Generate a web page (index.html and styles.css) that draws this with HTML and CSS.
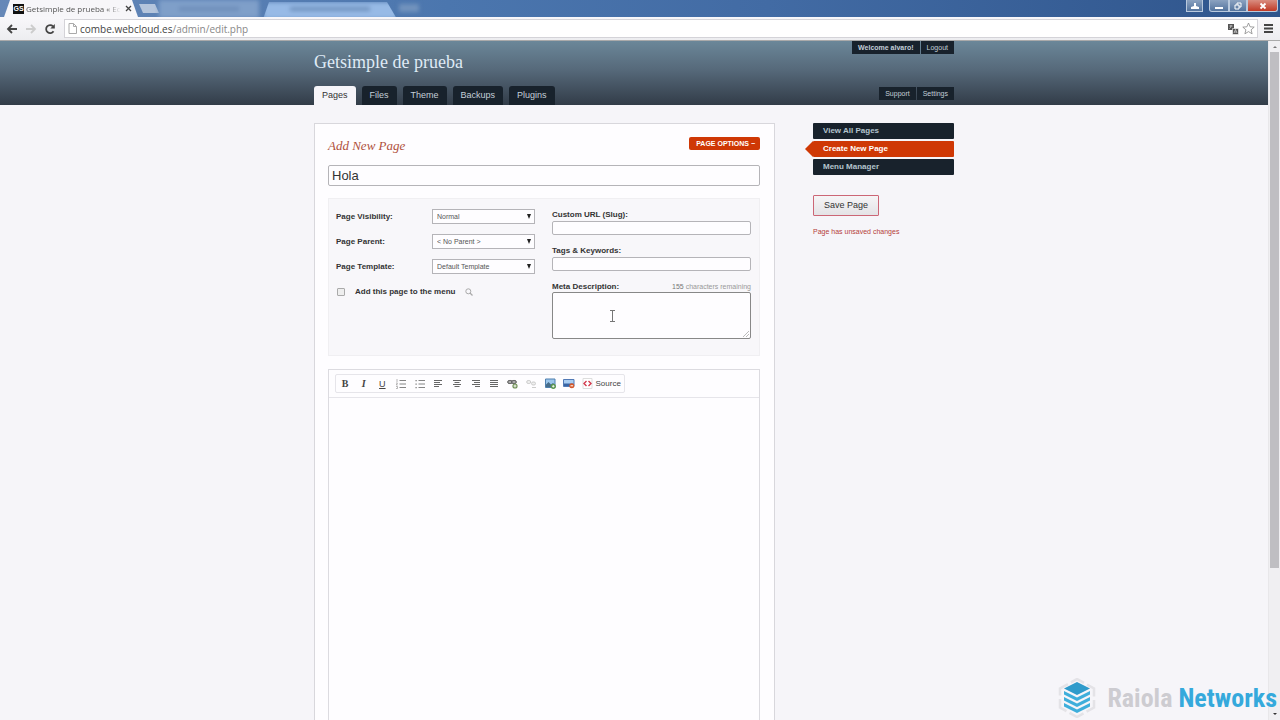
FILE: index.html
```html
<!DOCTYPE html>
<html lang="en">
<head>
<meta charset="UTF-8">
<title>Getsimple de prueba</title>
<link rel="stylesheet" href="styles.css">
</head>
<body>

<div class="tabstrip">
  <div class="tab">
    <span class="favicon">GS</span>
    <span class="tab-title">Getsimple de prueba « Ec</span>
    <button class="tab-close" aria-label="Close tab">
      <svg width="7" height="7" viewBox="0 0 7 7"><path d="M1 1l5 5M6 1L1 6" stroke="#444" stroke-width="1.3"/></svg>
    </button>
  </div>
  <button class="new-tab" aria-label="New tab"></button>
  <div class="blurred one"><i></i></div>
  <div class="blurred two"><i></i></div>
  <div class="blurred three"></div>
  <div class="window-buttons">
    <button class="win user" aria-label="User"><svg width="8" height="8" viewBox="0 0 8 8"><path d="M3 1h2v3l3 1v2H0V5l3-1z" fill="#fff"/></svg></button>
    <button class="win min" aria-label="Minimize"><svg width="8" height="8" viewBox="0 0 8 8"><path d="M0 5h8v2H0z" fill="#fff"/></svg></button>
    <button class="win max" aria-label="Restore"><svg width="8" height="8" viewBox="0 0 8 8"><path d="M3 3V1h4v4H5M1 3h4v4H1z" fill="none" stroke="#fff"/></svg></button>
    <button class="win close" aria-label="Close"><svg width="8" height="8" viewBox="0 0 8 8"><path d="M1.500 1.500l5 5M6.500 1.500l-5 5" stroke="#fff" stroke-width="1.800"/></svg></button>
  </div>
</div>

<div class="toolbar">
  <button class="nav" aria-label="Back"><svg width="12" height="10" viewBox="0 0 12 10"><path d="M11 5H2M6 1L2 5l4 4" fill="none" stroke="#444" stroke-width="1.800"/></svg></button>
  <button class="nav" aria-label="Forward"><svg width="12" height="10" viewBox="0 0 12 10"><path d="M1 5h9M6 1l4 4-4 4" fill="none" stroke="#ccc" stroke-width="1.800"/></svg></button>
  <button class="nav" aria-label="Reload"><svg width="12" height="12" viewBox="0 0 12 12"><path d="M9.500 8.300A4 4 0 1 1 9 3.300" fill="none" stroke="#444" stroke-width="1.800"/><path d="M10.800 1v4.500H6.300z" fill="#444"/></svg></button>
  <div class="address">
    <svg width="9" height="11" viewBox="0 0 9 11"><path d="M1 .5h4.500L8.500 3.500v7H1zM5.500.5v3h3" fill="#fff" stroke="#aaa"/></svg>
    <span class="url">combe.webcloud.es<span>/admin/edit.php</span></span>
    <svg width="12" height="12" viewBox="0 0 12 12"><path d="M1 1h6v6H1z" fill="#555"/><path d="M5.500 5.500h6v6h-6z" fill="#555" stroke="#fff" stroke-width=".6"/><path d="M2.500 3h3M4 2v1c0 1-.5 2-1.500 2.500M7 10l1.500-3.500L10 10M7.500 9h2" fill="none" stroke="#ddd" stroke-width=".7"/></svg>
    <svg width="13" height="13" viewBox="0 0 13 13"><path d="M6.500 1l1.600 3.800 4.100.3-3.100 2.700 1 4-3.600-2.200-3.600 2.200 1-4L.8 5.100l4.100-.3z" fill="#fff" stroke="#888" stroke-width=".8"/></svg>
  </div>
  <button class="nav menu" aria-label="Menu"><svg width="9" height="9" viewBox="0 0 9 9"><path d="M0 1h9M0 4.500h9M0 8h9" stroke="#444" stroke-width="1.800"/></svg></button>
</div>

<div class="viewport">
  <div class="page">
    <header class="header">
      <div class="wrapper header-inner">
        <div class="header-left">
          <h1><a href="#">Getsimple de prueba</a></h1>
          <nav class="tabs">
            <a class="current" href="#">Pages</a>
            <a href="#">Files</a>
            <a href="#">Theme</a>
            <a href="#">Backups</a>
            <a href="#">Plugins</a>
          </nav>
        </div>
        <div class="header-right">
          <div class="pills user-pills"><a class="welcome" href="#">Welcome alvaro!</a><a href="#">Logout</a></div>
          <div class="pills"><a href="#">Support</a><a href="#">Settings</a></div>
        </div>
      </div>
    </header>

    <div class="wrapper body-content">
      <main class="main">
        <div class="title-row">
          <h3>Add New Page</h3>
          <button class="page-options">Page Options −</button>
        </div>
        <input class="text title" type="text" value="Hola" aria-label="Page title">

        <div class="metadata">
          <div class="leftopt">
            <div class="row">
              <label for="visibility">Page Visibility:</label>
              <span class="select"><select id="visibility"><option>Normal</option></select></span>
            </div>
            <div class="row">
              <label for="parent">Page Parent:</label>
              <span class="select"><select id="parent"><option>&lt; No Parent &gt;</option></select></span>
            </div>
            <div class="row">
              <label for="template">Page Template:</label>
              <span class="select"><select id="template"><option>Default Template</option></select></span>
            </div>
            <div class="row check">
              <input type="checkbox" id="menu-enable">
              <label for="menu-enable">Add this page to the menu</label>
              <svg width="8" height="8" viewBox="0 0 8 8"><circle cx="3.300" cy="3.300" r="2.500" fill="none" stroke="#aaa"/><path d="M5 5l2.500 2.500" stroke="#aaa" stroke-width="1.300"/></svg>
            </div>
          </div>
          <div class="rightopt">
            <label for="slug">Custom URL (Slug):</label>
            <input class="text" type="text" id="slug">
            <label for="keywords">Tags &amp; Keywords:</label>
            <input class="text" type="text" id="keywords">
            <div class="label-row">
              <label for="description">Meta Description:</label>
              <span class="countdown"><b>155</b> characters remaining</span>
            </div>
            <div class="description">
              <textarea class="text" id="description"></textarea>
              <svg class="grip" width="6" height="6" viewBox="0 0 6 6"><path d="M0 6l6-6M3 6l3-3" stroke="#aaa" stroke-width=".8"/></svg>
              <svg class="cursor" width="7" height="12" viewBox="0 0 7 12"><path d="M1 .5h5M1 11.500h5M3.500 1v10" stroke="#666" stroke-width=".9"/></svg>
            </div>
          </div>
        </div>

        <div class="editor">
          <div class="editor-top">
            <div class="tools">
              <button class="bold" aria-label="Bold">B</button>
              <button class="italic" aria-label="Italic">I</button>
              <button class="underline" aria-label="Underline">U</button>
              <button aria-label="Numbered list"><svg width="10" height="10" viewBox="0 0 10 10"><path d="M3.500 1.500H10M3.500 5H10M3.500 8.500H10" stroke="#777" stroke-width=".9"/><path d="M1 0v3M0 4h1.500L.3 6h1.400M0 7.500h1.500v2H0" fill="none" stroke="#888" stroke-width=".6"/></svg></button>
              <button aria-label="Bulleted list"><svg width="10" height="10" viewBox="0 0 10 10"><path d="M3.500 1.500H10M3.500 5H10M3.500 8.500H10" stroke="#777" stroke-width=".9"/><path d="M.5 1h1.200v1.200H.5zM.5 4.500h1.200v1.200H.5zM.5 8h1.200v1.200H.5z" fill="#777"/></svg></button>
              <button aria-label="Align left"><svg width="8" height="8" viewBox="0 0 8 8"><path d="M0 .5h8M0 2.500h6M0 4.500h8M0 6.500h5" stroke="#666"/></svg></button>
              <button aria-label="Center"><svg width="8" height="8" viewBox="0 0 8 8"><path d="M0 .5h8M1.500 2.500h5M0 4.500h8M1.500 6.500h5" stroke="#666"/></svg></button>
              <button aria-label="Align right"><svg width="8" height="8" viewBox="0 0 8 8"><path d="M0 .5h8M2 2.500h6M0 4.500h8M3 6.500h5" stroke="#666"/></svg></button>
              <button aria-label="Justify"><svg width="8" height="8" viewBox="0 0 8 8"><path d="M0 .5h8M0 2.500h8M0 4.500h8M0 6.500h8" stroke="#666"/></svg></button>
              <button aria-label="Link"><svg width="11" height="10" viewBox="0 0 11 10"><rect x=".7" y="1.500" width="4.600" height="3" rx="1.500" fill="#aaa" stroke="#555"/><rect x="4.700" y="1.500" width="4.600" height="3" rx="1.500" fill="#aaa" stroke="#555"/><circle cx="8" cy="7" r="2.600" fill="#6f8f55"/><path d="M6.500 7h3M8 5.500v3" stroke="#fff" stroke-width=".9"/></svg></button>
              <button aria-label="Unlink" disabled><svg width="11" height="10" viewBox="0 0 11 10"><rect x=".7" y="1.500" width="4" height="3" rx="1.500" fill="#eee" stroke="#ccc"/><rect x="5.500" y="3" width="4" height="3" rx="1.500" fill="#eee" stroke="#ccc"/><path d="M6 8.500h4" stroke="#ccc"/></svg></button>
              <button aria-label="Image"><svg width="11" height="11" viewBox="0 0 11 11"><path d="M.5 1h9.500v8.500H.5z" fill="#9cc6ec" stroke="#4f7fae"/><path d="M1 6.500l2.500-2.500L6 6.500l2-1.500 1.500 1.500V9H1z" fill="#476d8b"/><circle cx="8.300" cy="8.300" r="2.600" fill="#5b9651"/><path d="M7 8.300h2.600M8.300 7v2.600" stroke="#fff" stroke-width=".8"/></svg></button>
              <button aria-label="Remove image"><svg width="12" height="11" viewBox="0 0 12 11"><path d="M.5 1.500H11v7H.5z" fill="#a9cdf2" stroke="#5179b5"/><path d="M1 5.500h9.500V8H1z" fill="#3865a5"/><circle cx="8.800" cy="7.800" r="2.500" fill="#d4582c"/><path d="M7.500 7.800h2.600" stroke="#fff"/></svg></button>
              <button class="source"><svg width="11" height="11" viewBox="0 0 11 11"><path d="M1 .5h9v10H1z" fill="#fff" stroke="#ddd"/><path d="M4.500 3L2 5.500 4.500 8M6.500 3L9 5.500 6.500 8" fill="none" stroke="#d33a4e" stroke-width="1.400"/></svg>Source</button>
            </div>
          </div>
          <div class="editor-area" contenteditable="true"></div>
        </div>
      </main>

      <aside class="sidebar">
        <nav class="side-nav">
          <a href="#">View All Pages</a>
          <a class="current" href="#">Create New Page</a>
          <a href="#">Menu Manager</a>
        </nav>
        <button class="save">Save Page</button>
        <p class="notice">Page has unsaved changes</p>
      </aside>
    </div>
  </div>
  <div class="scrollbar">
    <span class="arrow up"></span>
    <span class="thumb"></span>
    <span class="arrow down"></span>
  </div>
</div>

<div class="watermark">
  <svg width="38" height="40" viewBox="0 0 38 40">
    <path d="M19 1l17 9.500v19L19 39 2 29.500v-19z" fill="none" stroke="#e4e3e7" stroke-width="2.500" stroke-dasharray="16 3.500" stroke-dashoffset="8"/>
    <path d="M19 4l13 6.500L19 17 6 10.500z" fill="#2f9bcb"/>
    <path d="M6 13l13 6.500L32 13v3.500L19 23 6 16.500zM6 19l13 6.500L32 19v3.500L19 29 6 22.500zM6 25l13 6.500L32 25v3.500L19 35 6 28.500z" fill="#3eaedb"/>
  </svg>
  <span class="raiola">Raiola</span>
  <span class="networks">Networks</span>
</div>

</body>
</html>
```
FILE: styles.css
```css
* {
  box-sizing: border-box;
}

body {
  margin: 0;
  height: 100vh;
  display: flex;
  flex-direction: column;
  overflow: hidden;
  background: #f6f5f9;
  font-family: "Liberation Sans", Arial, sans-serif;
  font-size: 8px;
  color: #333;
}

a {
  color: inherit;
  text-decoration: none;
}

button, input, select, textarea {
  font-family: inherit;
  margin: 0;
}

button {
  border: 0;
  padding: 0;
  background: none;
}

svg {
  flex: none;
}

/* browser window */
.tabstrip {
  flex: none;
  display: flex;
  height: 17px;
  padding-left: 4px;
  overflow: hidden;
  background: linear-gradient(to right, #6688b8, #4b76ae 35%, #426ba4 60%, #2f558c);
}

.tab {
  display: flex;
  align-items: center;
  width: 134px;
  padding: 0 6px 0 9px;
  background: #f7f6f9;
  clip-path: polygon(6px 0, 128px 0, 100% 100%, 0 100%);
  font-family: "Open Sans", sans-serif;
}

.favicon {
  flex: none;
  width: 11px;
  height: 10px;
  background: #111;
  color: #fff;
  font: bold 7px/10px "Liberation Sans", sans-serif;
  text-align: center;
}

.tab-title {
  flex: 1;
  margin-left: 2px;
  white-space: nowrap;
  color: #555;
  -webkit-mask-image: linear-gradient(to right, #000 85%, transparent);
}

.tab-close {
  display: flex;
  margin: 0 2px 0 4px;
}

.new-tab {
  width: 20px;
  height: 9px;
  margin: 4px 0 0 1px;
  background: #b5c5dc;
  clip-path: polygon(0 0, 80% 0, 100% 100%, 20% 100%);
}

.blurred {
  filter: blur(2px);
}

.blurred i {
  display: block;
  width: 60%;
  height: 4px;
  margin: 4px auto;
  background: #6f92be;
}

.blurred.one {
  width: 100px;
  height: 18px;
  padding-top: 3px;
  background: #7f9fc9;
}

.blurred.one i {
  background: #6d8db9;
}

.blurred.two {
  width: 134px;
  height: 17px;
  margin: 2px 0 0 4px;
  padding-top: 1px;
  background: #97bae6;
  clip-path: polygon(6px 0, 124px 0, 100% 100%, 0 100%);
}

.blurred.three {
  width: 20px;
  height: 8px;
  margin: 4px 0 0 2px;
  background: #7293bd;
}

.window-buttons {
  display: flex;
  margin: 0 2px 0 auto;
}

.win {
  display: flex;
  align-items: center;
  justify-content: center;
  width: 18px;
  height: 12px;
  border: 1px solid #b9c9dd;
  border-top: 0;
  background: linear-gradient(#8ba2c0, #54749e);
}

.win.user {
  width: 17px;
  margin-right: 6px;
}

.win.min {
  width: 20px;
  border-radius: 0 0 0 3px;
}

.win.close {
  width: 31px;
  border-radius: 0 0 3px 0;
  background: linear-gradient(#d98d80, #c03a26);
}

.toolbar {
  flex: none;
  display: flex;
  align-items: center;
  height: 24px;
  padding: 0 7px 0 6px;
  background: linear-gradient(#f8f7fa, #ededf0);
  border-bottom: 1px solid #aaa;
}

.nav {
  display: flex;
  width: 12px;
  margin-right: 7px;
}

.address {
  flex: 1;
  display: flex;
  align-items: center;
  height: 19px;
  margin-left: 1px;
  padding: 0 2px 0 3px;
  gap: 3px;
  border: 1px solid #d4d3d8;
  background: #fff;
}

.url {
  flex: 1;
  color: #444;
  font-family: "Open Sans", sans-serif;
  font-size: 10px;
}

.url span {
  color: #888;
}

.nav.menu {
  width: 9px;
  margin: 0 0 0 6px;
}

.viewport {
  flex: 1;
  min-height: 0;
  display: flex;
}

.page {
  flex: 1;
  display: flex;
  flex-direction: column;
}

.scrollbar {
  width: 12px;
  padding: 0 1px;
  display: flex;
  flex-direction: column;
  align-items: center;
  background: #f0eff2;
  border-left: 1px solid #e8e7ea;
}

.thumb {
  width: 9px;
  height: 76%;
  background: #bfbec2;
}

.arrow {
  border: 2px solid transparent;
}

.arrow.up {
  margin: 3px 0 4px;
  border-bottom-color: #777;
}

.arrow.down {
  margin: auto 0 3px;
  border-top-color: #333;
}

/* header */
.wrapper {
  width: 640px;
  margin: 0 auto;
}

.header {
  height: 64px;
  background: linear-gradient(#6b8799, #56697a 45%, #323c48);
}

.header-inner {
  display: flex;
  justify-content: space-between;
  height: 100%;
}

.header-left, .header-right {
  display: flex;
  flex-direction: column;
  justify-content: space-between;
}

.header h1 {
  margin: 10px 0 0;
  color: #dfeaf5;
  font: 18px/22px Georgia, "Liberation Serif", serif;
}

.tabs {
  display: flex;
  gap: 6px;
}

.tabs a {
  padding: 0 8px;
  border-radius: 3px 3px 0 0;
  background: #18222c;
  color: #c3ced8;
  font-size: 9px;
  line-height: 19px;
}

.tabs .current {
  background: #f6f5f9;
  color: #333;
}

.header-right {
  align-items: flex-end;
  padding-bottom: 5px;
}

.pills {
  display: flex;
  gap: 1px;
}

.pills a {
  padding: 0 6px;
  background: #18222c;
  color: #c3ced8;
  font-size: 7px;
  line-height: 13px;
}

.pills .welcome {
  font-weight: bold;
}

/* main column */
.body-content {
  flex: 1;
  min-height: 0;
  display: flex;
  justify-content: space-between;
  align-items: flex-start;
  padding-top: 18px;
}

.main {
  width: 461px;
  align-self: stretch;
  display: flex;
  flex-direction: column;
  padding: 13px 14px 0 13px;
  border: 1px solid #d8d7dc;
  border-bottom: 0;
  background: #fefdff;
}

.title-row {
  display: flex;
  justify-content: space-between;
  align-items: flex-start;
  height: 28px;
}

.main h3 {
  margin: 0;
  color: #b0503c;
  font: italic 13px/17px Georgia, "Liberation Serif", serif;
}

.page-options {
  padding: 0 5px 0 7px;
  border-radius: 2px;
  background: #cf3805;
  color: #fff;
  font-size: 7px;
  font-weight: bold;
  line-height: 13px;
  text-transform: uppercase;
}

.text {
  display: block;
  width: 100%;
  height: 14px;
  padding: 1px 3px;
  border: 1px solid #b5b4b8;
  border-radius: 2px;
  background: #fefdff;
  color: #333;
  font-size: 9px;
}

.text.title {
  height: 21px;
  font-size: 13px;
}

.metadata {
  display: flex;
  gap: 17px;
  height: 158px;
  margin: 12px 0 13px;
  padding: 10px 8px 0 7px;
  border: 1px solid #f0eff2;
  background: #f8f7fa;
}

.metadata label {
  line-height: 11px;
  font-weight: bold;
}

.leftopt, .rightopt {
  flex: 1;
}

.row {
  display: flex;
  align-items: center;
  justify-content: space-between;
  height: 15px;
  margin-bottom: 10px;
}

.select {
  position: relative;
  width: 103px;
}

.select::after {
  content: "";
  position: absolute;
  right: 4px;
  top: 5px;
  border: 2px solid transparent;
  border-top: 5px solid #222;
  border-bottom: 0;
  pointer-events: none;
}

select {
  display: block;
  appearance: none;
  width: 100%;
  height: 15px;
  padding: 0 4px;
  border: 1px solid #b5b4b8;
  border-radius: 0;
  background: #fefdff;
  color: #555;
  font-size: 7px;
}

.check {
  justify-content: flex-start;
  gap: 10px;
}

.check input {
  appearance: none;
  width: 8px;
  height: 8px;
  margin-left: 1px;
  border: 1px solid #aaa;
  border-radius: 1px;
  background: #eee;
}

.rightopt label {
  display: block;
}

.rightopt input {
  margin: 1px 0 10px;
}

.label-row {
  display: flex;
  justify-content: space-between;
  align-items: center;
}

.countdown {
  color: #999;
  font-size: 7px;
}

.countdown b {
  color: #777;
  font-weight: normal;
}

.description {
  position: relative;
}

.description textarea {
  height: 47px;
  border-color: #888;
  resize: none;
}

.grip {
  position: absolute;
  right: 2px;
  bottom: 2px;
}

.cursor {
  position: absolute;
  left: 57px;
  top: 18px;
}

/* editor */
.editor {
  flex: 1;
  display: flex;
  flex-direction: column;
  border: 1px solid #dcdbe0;
  border-bottom: 0;
}

.editor-top {
  display: flex;
  padding: 4px 6px;
  border-bottom: 1px solid #e6e5ea;
}

.tools {
  display: flex;
  align-items: center;
  justify-content: space-between;
  width: 290px;
  height: 19px;
  border: 1px solid #e6e5ea;
  border-radius: 2px;
}

.tools button {
  display: flex;
  align-items: center;
  justify-content: center;
  width: 18px;
  height: 17px;
  color: #444;
  font-size: 8px;
}

.tools .bold {
  font: bold 10px "Liberation Serif", serif;
}

.tools .italic {
  font: italic bold 10px "Liberation Serif", serif;
}

.tools .underline {
  font-size: 9px;
  text-decoration: underline;
}

.tools .source {
  width: auto;
  padding: 0 3px;
  gap: 3px;
}

.editor-area {
  flex: 1;
}

/* sidebar */
.sidebar {
  width: 141px;
}

.side-nav {
  display: flex;
  flex-direction: column;
  gap: 2px;
}

.side-nav a {
  position: relative;
  padding: 0 10px;
  border-radius: 1px;
  background: #18222c;
  color: #b4c4ce;
  font-weight: bold;
  line-height: 16px;
}

.side-nav .current {
  background: #cf3805;
  color: #fff;
}

.side-nav .current::before {
  content: "";
  position: absolute;
  right: 100%;
  top: 0;
  border: 8px solid transparent;
  border-right-color: #cf3805;
  border-left: 0;
}

.save {
  margin-top: 20px;
  padding: 0 10px;
  border: 1px solid #cc6676;
  border-radius: 1px;
  background: linear-gradient(#f6f5f7, #e4e3e6);
  color: #333;
  font-size: 9px;
  line-height: 19px;
}

.notice {
  margin: 11px 0 0;
  color: #b5403a;
  font-size: 7px;
  line-height: 10px;
}

/* logo over the page */
.watermark {
  position: absolute;
  right: 3px;
  bottom: 2px;
  display: flex;
  align-items: center;
  font-family: "Roboto Condensed", Roboto, sans-serif;
  font-size: 26px;
  font-weight: bold;
}

.raiola {
  margin: 0 6px 0 11px;
  color: #cdccd1;
}

.networks {
  color: #35a9dc;
}
```
